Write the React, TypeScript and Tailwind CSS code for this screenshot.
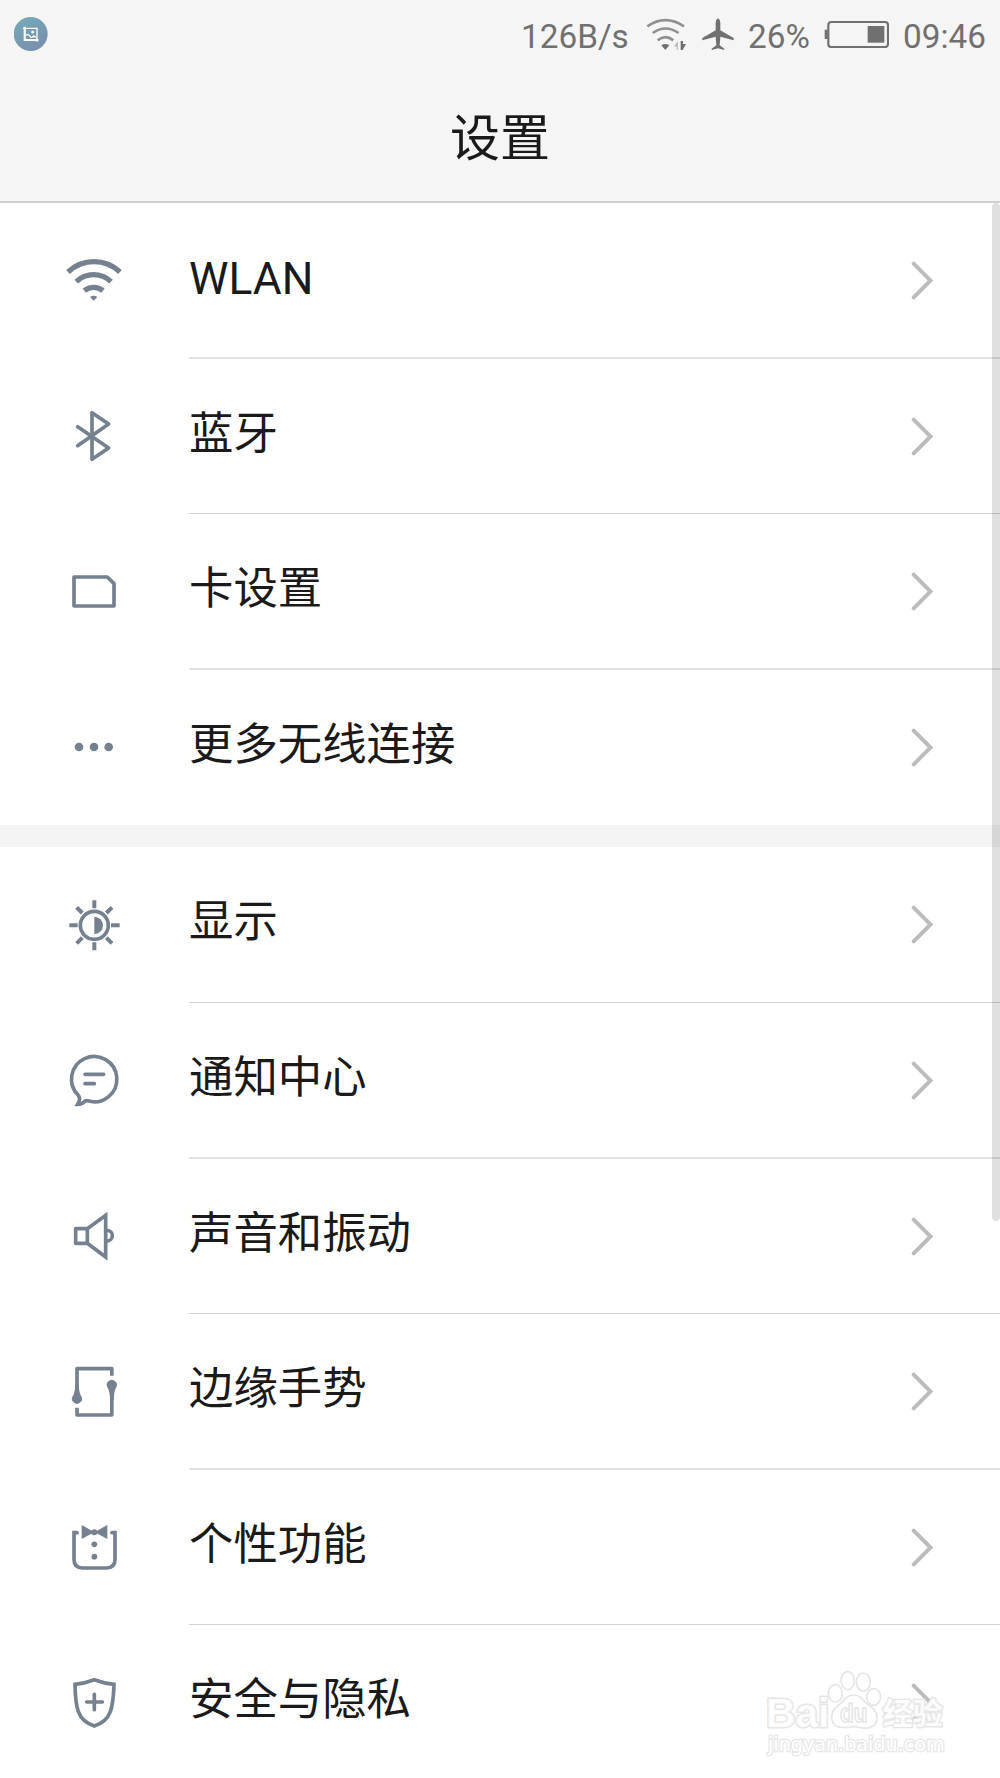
import React from 'react';

type IconProps = { children: React.ReactNode };

function Icon({ children }: IconProps) {
  return (
    <svg
      className="ml-16 mt-12 h-[60px] w-[60px] shrink-0 text-[#75818f]"
      viewBox="0 0 180 180"
      fill="none"
      stroke="currentColor"
      strokeWidth="11"
    >
      {children}
    </svg>
  );
}

const WlanIcon = () => (
  <Icon>
    <g strokeWidth="16">
      <path d="M12 63A113 113 0 0 1 168 63" />
      <path d="M37 92A74 74 0 0 1 141 92" />
      <path d="M61 119A45 45 0 0 1 117 119" />
    </g>
    <path d="M78 138Q89 131 100 138L89 149Z" fill="currentColor" stroke="none" />
  </Icon>
);

const BluetoothIcon = () => (
  <Icon>
    <path d="M41 59L134 123L84 157V17L134 51L41 116" strokeLinecap="round" strokeLinejoin="round" strokeWidth="11" />
  </Icon>
);

const CardIcon = () => (
  <Icon>
    <path d="M30 45H130L150 65V132H30Z" strokeLinejoin="round" />
  </Icon>
);

const MoreIcon = () => (
  <Icon>
    <g fill="currentColor" stroke="none">
      <circle cx="45" cy="87" r="13" />
      <circle cx="90" cy="87" r="13" />
      <circle cx="134" cy="87" r="13" />
    </g>
  </Icon>
);

const DisplayIcon = () => (
  <Icon>
    <circle cx="91" cy="91" r="42" />
    <path d="M91 65A26 26 0 0 1 91 117Z" fill="currentColor" stroke="none" />
    <path
      strokeWidth="12"
      d="M91 16V40M91 142V166M16 91H41M141 91H167M38 37L55 54M144 37L127 54M38 145L55 128M144 145L127 128"
    />
  </Icon>
);

const NotificationIcon = () => (
  <Icon>
    <g transform="translate(0 2)">
      <path d="M71 147.500A68 68 0 1 0 43 131Q51 142 41 158Q55 158 62 149Q66 146 71 147.500Z" strokeLinejoin="miter" />
      <path d="M63 68H119M63 96H91" strokeLinecap="round" />
    </g>
  </Icon>
);

const SoundIcon = () => (
  <Icon>
    <path d="M70 65H35V109H70Z" strokeLinejoin="round" />
    <path d="M70 65L125 25V150L70 109" />
    <path d="M127 70.500H130A15 15.500 0 0 1 130 101.500H127" />
  </Icon>
);

const EdgeIcon = () => (
  <Icon>
    <path d="M39 90V20H143.500V41" strokeLinejoin="round" strokeWidth="11" />
    <path d="M39 137V159H143.500V90" strokeLinejoin="round" strokeWidth="11" />
    <g fill="currentColor" stroke="none">
      <path d="M34 65Q33 92 27 101A15 15 0 1 0 51 101Q45 92 44 65Z" />
      <path d="M138.500 115Q137 88 131.500 78A15 15 0 1 1 155.500 78Q150 88 149 115Z" />
    </g>
  </Icon>
);

const PersonalIcon = () => (
  <Icon>
    <path d="M40 44H30V124Q30 150 55 150H128Q153 150 153 124V44H143" />
    <g fill="currentColor" stroke="none">
      <circle cx="40" cy="44" r="5" />
      <circle cx="143" cy="44" r="5" />
      <path d="M53 21L85 39H98L130 21V63L98 46H85L53 63Z" />
      <circle cx="91" cy="42.500" r="9" />
      <circle cx="91" cy="79" r="8.500" />
      <circle cx="91" cy="116" r="8.500" />
    </g>
  </Icon>
);

const SecurityIcon = () => (
  <Icon>
    <path d="M91 20Q62 31 33 34Q34 92 43 116Q55 148 91 159Q127 148 139 116Q148 92 150 34Q120 31 91 20Z" />
    <path d="M68 87H115M91 64V110" strokeLinecap="round" strokeWidth="11" />
  </Icon>
);

type Row = { label: string; icon: React.ReactNode; size: string; line?: string; latin?: boolean };

const thick = 'h-[2px] bg-[#e2e2e2]';
const thin = 'h-px bg-[#d3d3d3]';

const network: Row[] = [
  { label: 'WLAN', icon: <WlanIcon />, size: 'h-[156px]', line: thick, latin: true },
  { label: '蓝牙', icon: <BluetoothIcon />, size: 'h-[155px]', line: thin },
  { label: '卡设置', icon: <CardIcon />, size: 'h-[156px]', line: thick },
  { label: '更多无线连接', icon: <MoreIcon />, size: 'h-[155px]' },
];

const device: Row[] = [
  { label: '显示', icon: <DisplayIcon />, size: 'h-[156px]', line: thin },
  { label: '通知中心', icon: <NotificationIcon />, size: 'h-[156px]', line: thick },
  { label: '声音和振动', icon: <SoundIcon />, size: 'h-[155px]', line: thin },
  { label: '边缘手势', icon: <EdgeIcon />, size: 'h-[156px]', line: thick },
  { label: '个性功能', icon: <PersonalIcon />, size: 'h-[155px]', line: thin },
  { label: '安全与隐私', icon: <SecurityIcon />, size: 'h-[156px]' },
];

function SettingRow({ label, icon, size, line, latin }: Row) {
  return (
    <div className={`flex ${size}`}>
      {icon}
      <div className="ml-[65px] flex flex-1 flex-col justify-between">
        <div className="flex justify-between pr-[66px]">
          <span
            className={`${latin ? 'mt-[44px]' : 'mt-[43px]'} whitespace-nowrap text-[44.4px] leading-[64px] text-[#1a1a1a]`}
          >
            {label}
          </span>
          <svg className="mt-[58px] h-10 w-6" viewBox="0 0 24 40" fill="none" stroke="#bcbcbc" strokeWidth="4" strokeLinecap="round">
            <path d="M3.700 2.700L20.500 19.500L3.700 36.300" />
          </svg>
        </div>
        {line && <div className={line} />}
      </div>
    </div>
  );
}

function StatusBar() {
  return (
    <div className="flex h-[70px] items-start justify-between px-[14px] text-[33.3px] leading-[40px] text-[#707070]">
      <svg className="mt-[17px] h-[34px] w-[34px]" viewBox="0 0 102 102">
        <defs>
          <linearGradient id="badge" x1="0.2" y1="0" x2="0.8" y2="1">
            <stop offset="0" stopColor="#76aab9" />
            <stop offset="1" stopColor="#788dab" />
          </linearGradient>
        </defs>
        <circle cx="50" cy="51" r="51" fill="url(#badge)" />
        <path d="M32 30V69H74M27 34H69V74" fill="none" stroke="#fff" strokeWidth="4" />
        <path d="M32 29V69H72" fill="none" stroke="#fff" strokeWidth="6" />
        <circle cx="56" cy="45" r="4.500" fill="#fff" />
        <path d="M35 55Q42 49 49 59Q54 64 59 57L66 62" fill="none" stroke="#fff" strokeWidth="4" />
      </svg>
      <div className="flex items-start">
        <span className="mt-[17px] w-[105px] whitespace-nowrap">126B/s</span>
        <svg className="ml-[20px] mt-4 h-9 w-11" viewBox="0 0 132 108" fill="none">
          <g stroke="#909090" strokeWidth="8">
            <path d="M4 31Q58 -6 114 31" />
            <path d="M20 51Q58 24 98 51" />
            <path d="M35 73Q58 54 82 73" />
          </g>
          <path d="M46 88Q58 80 70 88L58 102Z" fill="#707070" />
          <path d="M84 91L96 75V101H92V92Z" fill="#bcbcbc" />
          <path d="M104 75H111V84H120L110 102H104Z" fill="#707070" />
        </svg>
        <svg className="ml-[12px] mt-[18px] h-8 w-8" viewBox="0 0 96 96" fill="#707070">
          <path d="M48 1Q55 5 55 15V37L95 60V67L55 56L53 82L67 92V96L48 91L29 96V92L43 82L41 56L1 67V60L41 37V15Q41 5 48 1Z" />
        </svg>
        <span className="ml-[14px] mt-[17px] w-[62px] whitespace-nowrap">26%</span>
        <svg className="ml-[13px] mt-5 h-[28px] w-[66px]" viewBox="0 0 198 84" fill="none">
          <rect x="16" y="6" width="179" height="75" rx="9" stroke="#707070" strokeWidth="6.500" />
          <path d="M5 29H14V57H5Z" fill="#707070" />
          <rect x="134" y="18" width="50" height="50" fill="#707070" />
        </svg>
        <span className="ml-[14px] mt-[17px] w-[83px] whitespace-nowrap">09:46</span>
      </div>
    </div>
  );
}

function Watermark() {
  return (
    <svg className="absolute left-[740px] top-[1640px] h-[138px] w-[260px]" viewBox="0 0 780 414" fill="#fff" stroke="#e6e6e6" strokeWidth="5">
      <g fontWeight="700" fillOpacity="0.9" style={{ paintOrder: 'stroke' }}>
        <text className="font-['Liberation_Sans']" x="78" y="260" fontSize="122" strokeWidth="9" textLength="190" lengthAdjust="spacingAndGlyphs">
          Bai
        </text>
        <text className="font-['Noto_Sans_CJK_SC']" x="428" y="252" fontSize="90" strokeWidth="8" textLength="180" lengthAdjust="spacingAndGlyphs">
          经验
        </text>
      </g>
      <ellipse cx="286" cy="160" rx="21" ry="26" />
      <ellipse cx="323" cy="122" rx="20" ry="27" />
      <ellipse cx="370" cy="126" rx="21" ry="27" />
      <ellipse cx="401" cy="171" rx="21" ry="25" />
      <path d="M342 165C318 165 313 183 295 196C266 216 268 262 306 262C322 264 331 260 343 260C356 260 363 266 382 264C419 260 420 216 389 198C369 185 366 165 342 165Z" />
      <text className="font-['Liberation_Sans']" x="300" y="247" fontSize="76" fontWeight="700" textLength="82" lengthAdjust="spacingAndGlyphs">
        du
      </text>
      <text
        className="font-['DejaVu_Sans']"
        x="84"
        y="332"
        fontSize="58"
        strokeWidth="8"
        stroke="#e8e8e8"
        textLength="530"
        lengthAdjust="spacingAndGlyphs"
        style={{ paintOrder: 'stroke' }}
      >
        jingyan.baidu.com
      </text>
    </svg>
  );
}

export default function App() {
  return (
    <div className="relative h-[1778px] w-[1000px] overflow-hidden bg-white font-[Roboto,'Noto_Sans_CJK_SC',sans-serif]">
      <header className="h-[203px] border-b-2 border-[#cfcfcf] bg-[#f5f5f5]">
        <StatusBar />
        <h1 className="mt-[33px] text-center text-[50px] leading-[72px] text-[#1a1a1a]">设置</h1>
      </header>
      <main>
        {network.map((row) => (
          <SettingRow key={row.label} {...row} />
        ))}
        <div className="h-[22px] bg-[#f4f4f4]" />
        {device.map((row) => (
          <SettingRow key={row.label} {...row} />
        ))}
      </main>
      <div className="absolute right-0 top-[203px] h-[1018px] w-2 rounded bg-black/12" />
      <Watermark />
    </div>
  );
}
